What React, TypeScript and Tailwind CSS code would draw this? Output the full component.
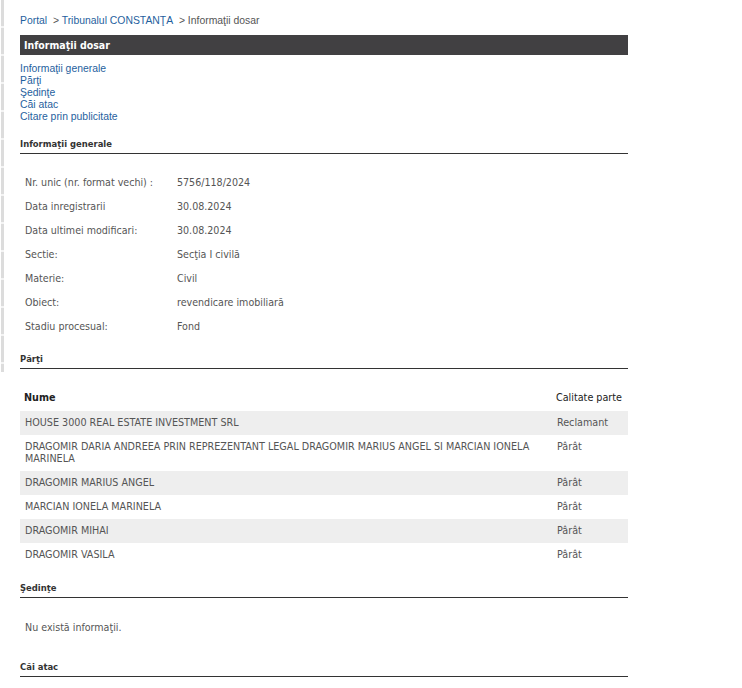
import React from 'react';

const links = ['Informaţii generale', 'Părţi', 'Şedinţe', 'Căi atac', 'Citare prin publicitate'];

const general: [string, string][] = [
  ['Nr. unic (nr. format vechi) :', '5756/118/2024'],
  ['Data inregistrarii', '30.08.2024'],
  ['Data ultimei modificari:', '30.08.2024'],
  ['Sectie:', 'Secţia I civilă'],
  ['Materie:', 'Civil'],
  ['Obiect:', 'revendicare imobiliară'],
  ['Stadiu procesual:', 'Fond'],
];

const parti: [string, string][] = [
  ['HOUSE 3000 REAL ESTATE INVESTMENT SRL', 'Reclamant'],
  ['DRAGOMIR DARIA ANDREEA PRIN REPREZENTANT LEGAL DRAGOMIR MARIUS ANGEL SI MARCIAN IONELA MARINELA', 'Pârât'],
  ['DRAGOMIR MARIUS ANGEL', 'Pârât'],
  ['MARCIAN IONELA MARINELA', 'Pârât'],
  ['DRAGOMIR MIHAI', 'Pârât'],
  ['DRAGOMIR VASILA', 'Pârât'],
];

function SectionTitle({ children }: { children: React.ReactNode }) {
  return (
    <div className="border-b border-[#333] pb-[2px] font-['DejaVu_Sans_Condensed','DejaVu_Sans',sans-serif] text-[9.4px] font-bold leading-[14px] text-[#333]">
      {children}
    </div>
  );
}

export default function App() {
  return (
    <div className="relative min-h-[688px] bg-white font-['Liberation_Sans',Arial,sans-serif]">
      {/* faint frame edge on the left */}
      <div className="absolute left-[1px] top-0 h-[372px] w-[3px] bg-[repeating-linear-gradient(to_bottom,#dcdcdc_0px,#dcdcdc_26px,#f4f4f4_26px,#f4f4f4_28px)]" />

      <div className="w-[608px] ml-[20px] pt-[14px]">
        {/* breadcrumb */}
        <div className="text-[10.4px] leading-[13px] text-[#555]">
          <a className="text-[#1f5f9e]">Portal</a>
          <span>&nbsp; &gt; </span>
          <a className="text-[#1f5f9e]">Tribunalul CONSTANŢA</a>
          <span>&nbsp; &gt; Informaţii dosar</span>
        </div>

        <div className="mt-[8px] h-[20px] bg-[#414042] pl-[4px] font-['DejaVu_Sans_Condensed','DejaVu_Sans',sans-serif] text-[10.5px] font-bold leading-[20px] text-white">
          Informaţii dosar
        </div>

        <div className="mt-[8px] flex flex-col text-[10.4px] leading-[12px] text-[#1f5f9e]">
          {links.map((l) => (
            <a key={l}>{l}</a>
          ))}
        </div>

        <div className="mt-[14px]">
          <SectionTitle>Informaţii generale</SectionTitle>
        </div>

        <div className="mt-[17px] flex flex-col font-['DejaVu_Sans_Condensed','DejaVu_Sans',sans-serif] text-[10.6px] text-[#555]">
          {general.map(([k, v]) => (
            <div key={k} className="flex h-[24px] items-center">
              <div className="w-[157px] pl-[5px]">{k}</div>
              <div>{v}</div>
            </div>
          ))}
        </div>

        <div className="mt-[13px]">
          <SectionTitle>Părţi</SectionTitle>
        </div>

        <table className="mt-[16px] w-full border-collapse font-['DejaVu_Sans_Condensed','DejaVu_Sans',sans-serif] text-[10.7px]">
          <thead>
            <tr>
              <th className="h-[26px] pl-[4px] text-left align-middle font-bold text-[#222]">Nume</th>
              <th className="w-[76px] whitespace-nowrap pl-[4px] text-left align-middle font-normal text-[#222]">Calitate parte</th>
            </tr>
          </thead>
          <tbody>
            {parti.map(([n, c], i) => (
              <tr key={n} className={i % 2 === 0 ? 'bg-[#eeeeee]' : ''}>
                <td className="py-[6px] pl-[5px] pr-[10px] align-top leading-[12px] text-[#555]">{n}</td>
                <td className="py-[6px] pl-[5px] align-top leading-[12px] text-[#555]">{c}</td>
              </tr>
            ))}
          </tbody>
        </table>

        <div className="mt-[14px]">
          <SectionTitle>Şedinţe</SectionTitle>
        </div>
        <div className="mt-[17px] pl-[5px] font-['DejaVu_Sans_Condensed','DejaVu_Sans',sans-serif] text-[10.6px] leading-[24px] text-[#555]">
          Nu există informaţii.
        </div>

        <div className="mt-[21px]">
          <SectionTitle>Căi atac</SectionTitle>
        </div>
      </div>
    </div>
  );
}
